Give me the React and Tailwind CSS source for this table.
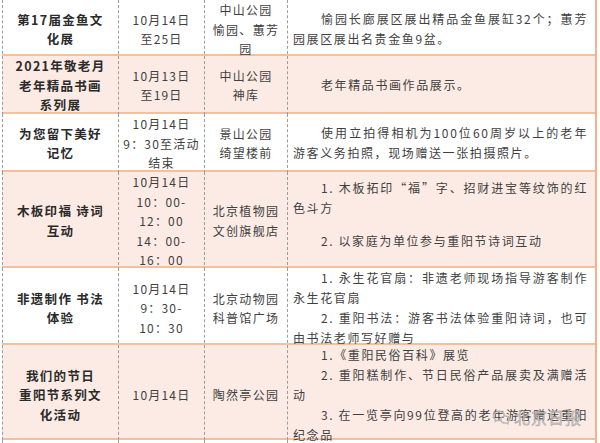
import React from "react";
import { RiWechatLine } from "react-icons/ri";

const rows = [
  {
    pink: false,
    h: "h-[56px]",
    c1: ["第17届金鱼文", "化展"],
    c2: ["10月14日", "至25日"],
    c3: ["中山公园", "愉园、蕙芳", "园"],
    c4: [
      { t: "愉园长廊展区展出精品金鱼展缸32个；蕙芳", i: true, f: true },
      { t: "园展区展出名贵金鱼9盆。" },
    ],
  },
  {
    pink: true,
    h: "h-[58px]",
    c1: ["2021年敬老月", "老年精品书画", "系列展"],
    c2: ["10月13日", "至19日"],
    c3: ["中山公园", "神库"],
    c4: [{ t: "老年精品书画作品展示。", i: true }],
  },
  {
    pink: false,
    h: "h-[58px]",
    c1: ["为您留下美好", "记忆"],
    c2: ["10月14日", "9：30至活动", "结束"],
    c3: ["景山公园", "绮望楼前"],
    c4: [
      { t: "使用立拍得相机为100位60周岁以上的老年", i: true, f: true },
      { t: "游客义务拍照，现场赠送一张拍摄照片。" },
    ],
  },
  {
    pink: true,
    h: "h-[96px]",
    c1: ["木板印福 诗词", "互动"],
    c2: ["10月14日", "10：00-", "12：00", "14：00-", "16：00"],
    c3: ["北京植物园", "文创旗舰店"],
    c4: [
      { t: "1. 木板拓印“福”字、招财进宝等纹饰的红", i: true, f: true },
      { t: "色斗方" },
      { t: "2. 以家庭为单位参与重阳节诗词互动", i: true, gap: true },
    ],
    pb: true,
  },
  {
    pink: false,
    h: "h-[77px]",
    c1: ["非遗制作 书法", "体验"],
    c2: ["10月14日", "9：30-", "10：30"],
    c3: ["北京动物园", "科普馆广场"],
    c4: [
      { t: "1. 永生花官扇：非遗老师现场指导游客制作", i: true, f: true },
      { t: "永生花官扇" },
      { t: "2. 重阳书法：游客书法体验重阳诗词，也可", i: true, f: true },
      { t: "由书法老师写好赠与" },
    ],
  },
  {
    pink: true,
    h: "h-[95px]",
    c1: ["我们的节日", "重阳节系列文", "化活动"],
    c2: ["10月14日"],
    c3: ["陶然亭公园"],
    c4: [
      { t: "1.《重阳民俗百科》展览", i: true },
      { t: "2. 重阳糕制作、节日民俗产品展卖及满赠活", i: true, f: true },
      { t: "动" },
      { t: "3. 在一览亭向99位登高的老年游客赠送重阳", i: true, f: true },
      { t: "纪念品" },
    ],
  },
];

function Row({ r }) {
  return (
    <div
      className={`grid grid-cols-[117px_86px_83px_309px] ${r.h} border-b-2 border-[#f4c09c] ${
        r.pink ? "bg-[#fcebe4]" : "bg-white"
      }`}
    >
      <div className="flex flex-col items-center justify-center border-l border-r border-dashed border-[#9c9c9c] text-[12.5px] leading-[19.5px] font-bold tracking-[1.3px] text-[#2a2a2a]">
        {r.c1.map((l, k) => (
          <div key={k} className="whitespace-nowrap">{l}</div>
        ))}
      </div>
      <div className="flex flex-col items-center justify-center border-r border-dashed border-[#9c9c9c] text-[12px] leading-[19.5px] tracking-[1.2px] text-[#3f3f3f]">
        {r.c2.map((l, k) => (
          <div key={k} className="whitespace-nowrap">{l}</div>
        ))}
      </div>
      <div className="flex flex-col items-center justify-center border-r border-dashed border-[#9c9c9c] text-[12px] leading-[19.5px] tracking-[1.3px] text-[#3f3f3f]">
        {r.c3.map((l, k) => (
          <div key={k} className="whitespace-nowrap">{l}</div>
        ))}
      </div>
      <div
        className={`flex flex-col justify-center border-r-2 border-[#f1b48a] pl-[5px] pr-[7px] text-[12px] leading-[20px] tracking-[1.6px] text-[#3f3f3f] ${
          r.pb ? "pb-[12px]" : ""
        }`}
      >
        {r.c4.map((l, k) => (
          <div
            key={k}
            className={`whitespace-nowrap ${l.i ? "pl-[28px]" : ""} ${
              l.f ? "text-justify [text-align-last:justify]" : ""
            } ${l.gap ? "mt-[13px]" : ""}`}
          >
            {l.t}
          </div>
        ))}
      </div>
    </div>
  );
}

export default function App() {
  return (
    <div className="relative w-[600px] h-[443px] overflow-hidden bg-white font-['Noto_Sans_CJK_SC','Noto_Sans',sans-serif]">
      <div className="ml-[2px] w-[595px]">
        {rows.map((r, k) => (
          <Row key={k} r={r} />
        ))}
        <div className="grid grid-cols-[117px_86px_83px_309px] h-[12px] bg-white">
          <div className="border-l border-r border-dashed border-[#9c9c9c]" />
          <div className="border-r border-dashed border-[#9c9c9c]" />
          <div className="border-r border-dashed border-[#9c9c9c]" />
          <div className="border-r-2 border-[#f1b48a]" />
        </div>
      </div>
      <div className="absolute left-[492px] top-[407px] flex items-center gap-[3px] opacity-90">
        <RiWechatLine className="w-[19px] h-[19px] text-[#b5b5b5]" />
        <span className="text-[16px] leading-[20px] tracking-[1px] text-[#c4c4c4] [-webkit-text-stroke:0.4px_#9a9a9a]">
          北京日报
        </span>
      </div>
    </div>
  );
}
